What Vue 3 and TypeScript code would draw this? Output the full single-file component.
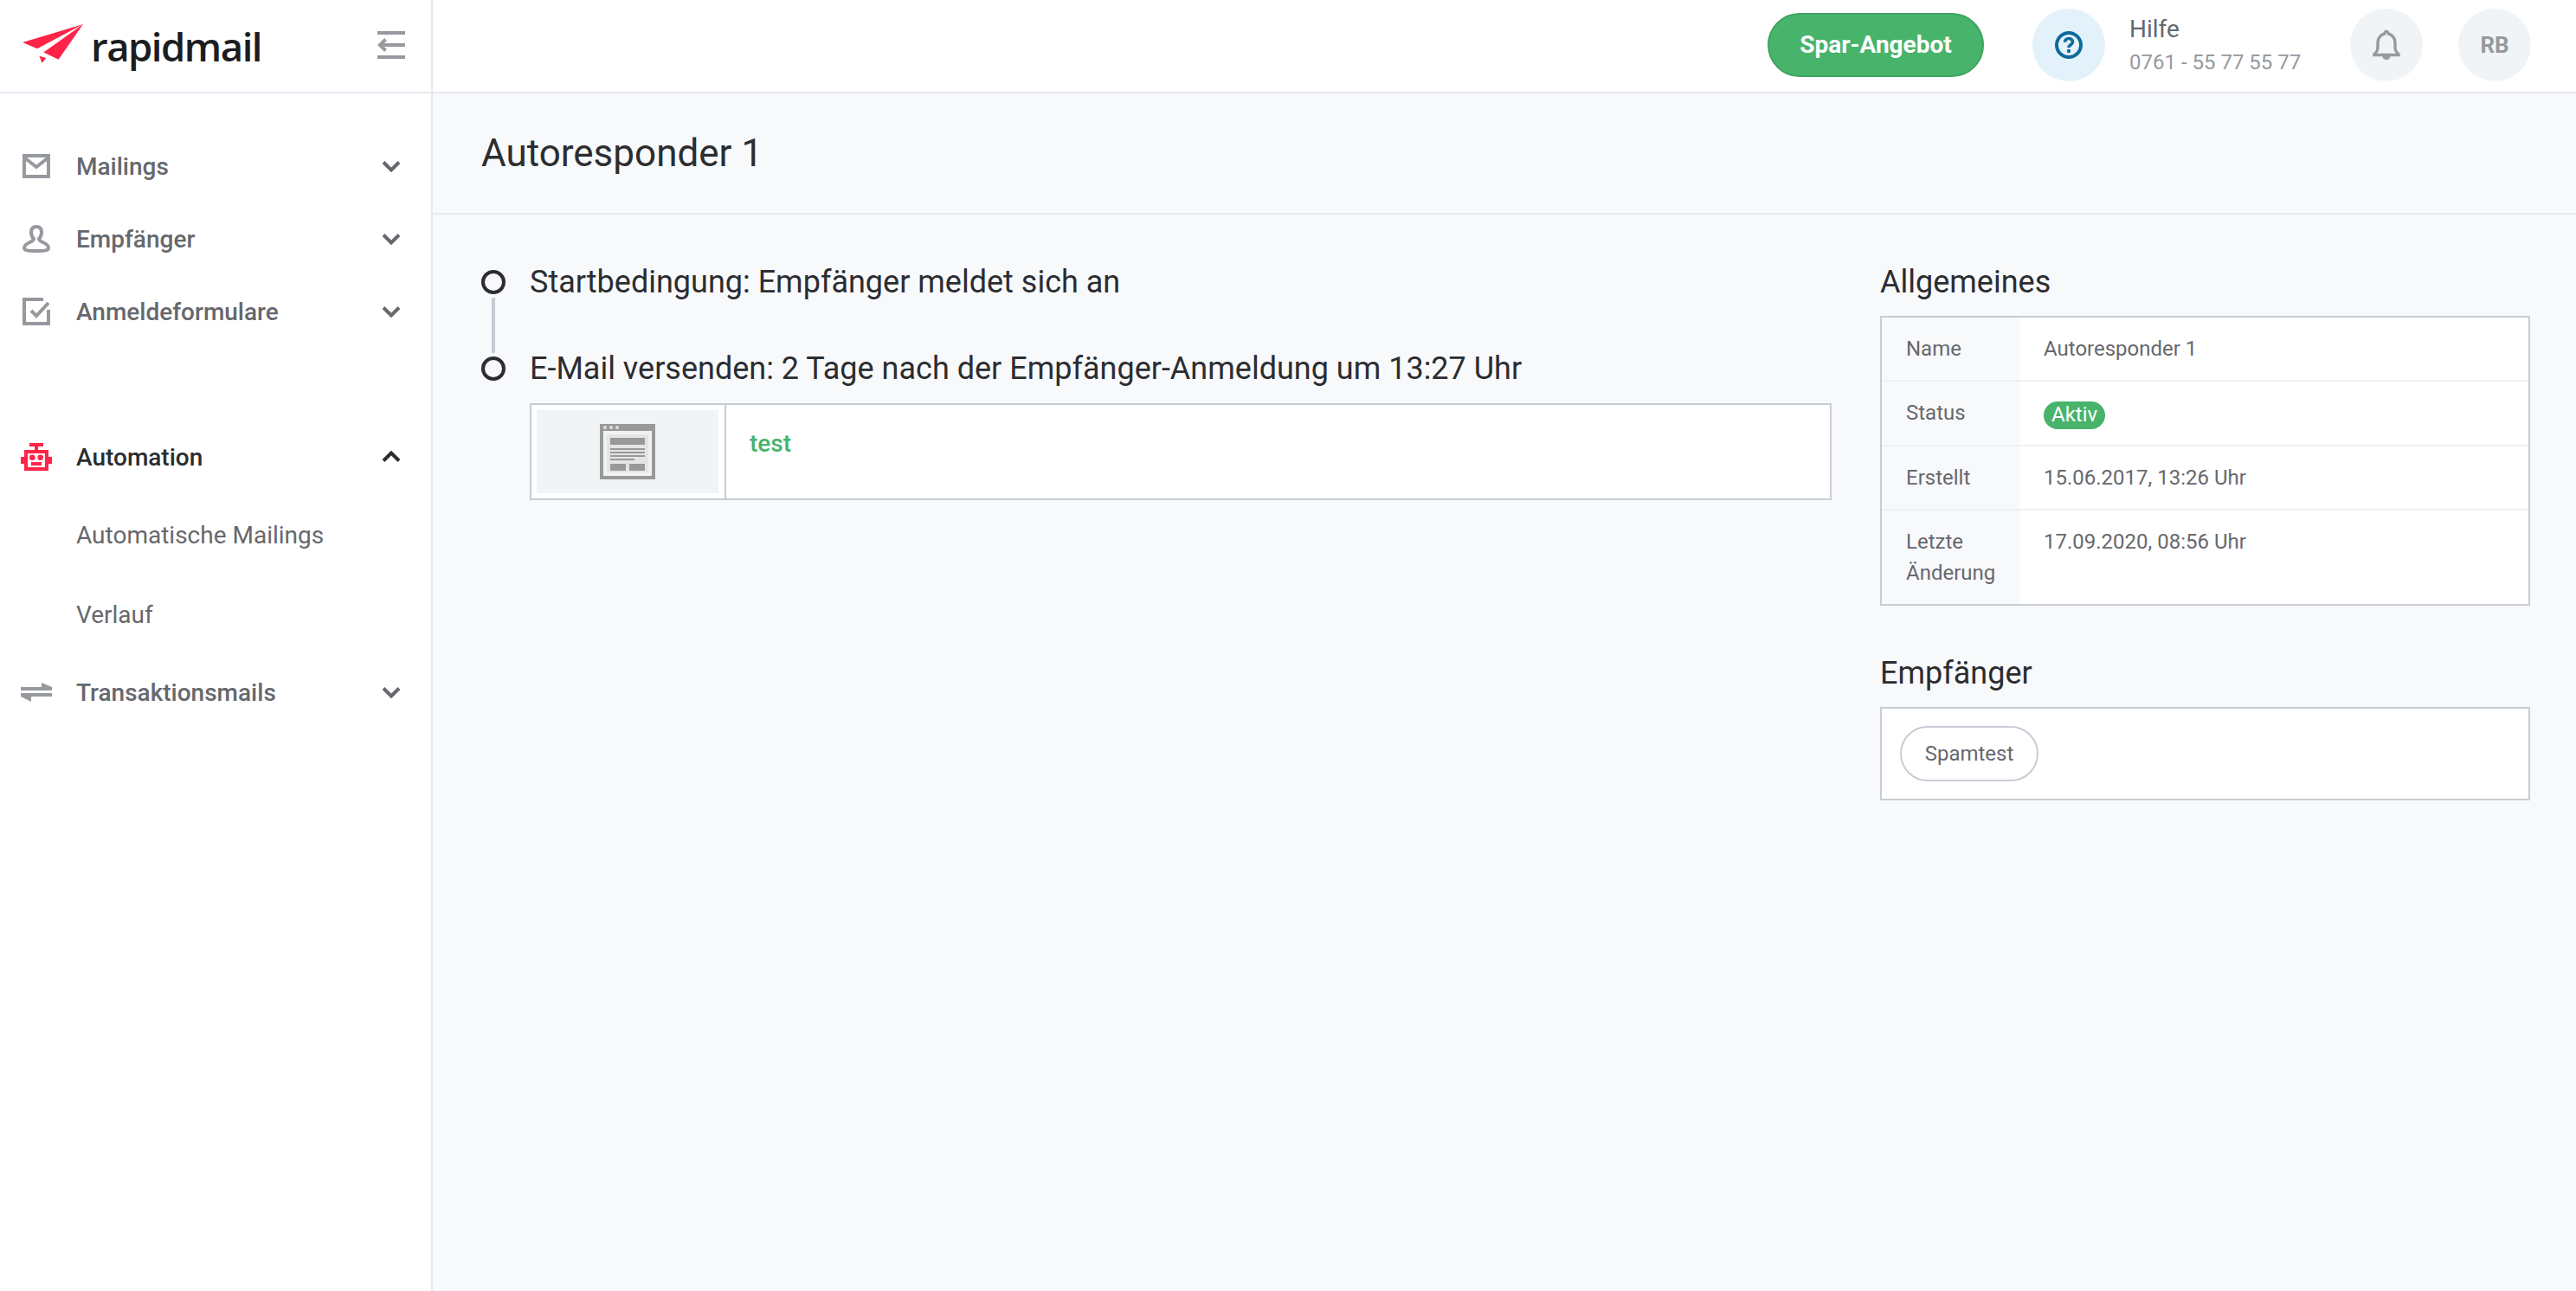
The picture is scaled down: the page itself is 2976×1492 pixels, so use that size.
<script setup lang="ts">
interface Row { label: string; value: string; badge?: boolean }
const rows: Row[] = [
  { label: 'Name', value: 'Autoresponder 1' },
  { label: 'Status', value: 'Aktiv', badge: true },
  { label: 'Erstellt', value: '15.06.2017, 13:26 Uhr' },
  { label: 'Letzte Änderung', value: '17.09.2020, 08:56 Uhr' },
]
</script>

<template>
  <div class="app">
    <aside class="sidebar">
      <div class="brand">
        <svg class="plane" width="72" height="46" viewBox="26 27 72 46">
          <path fill="#ff2448" d="M96 27 26 48l17 7.300zM96 27 50.300 59.500 67.600 67.700zM45.300 63.700l8 2.300-4.600 5.700z" />
        </svg>
        <span class="wordmark">rapidmail</span>
        <svg class="collapse" width="32" height="32" viewBox="0 0 32 32">
          <path fill="#96999e" d="M0 0h32v4H0zM0 28h32v4H0zM3 14h29v4H3z" />
          <path fill="none" stroke="#96999e" stroke-width="4" d="M9.500 9.500 3 16l6.500 6.500" />
        </svg>
      </div>
      <nav class="nav">
        <a class="item">
          <svg class="ico" width="32" height="28" viewBox="0 0 32 28"><g fill="none" stroke="#96999e" stroke-width="4"><rect x="2" y="2" width="28" height="24" /><path d="M2 4l14 11L30 4" /></g></svg>
          <span>Mailings</span>
          <svg class="chev" width="22" height="14" viewBox="0 0 22 14"><path d="M2 2.500l9 9 9-9" /></svg>
        </a>
        <a class="item">
          <svg class="ico" width="32" height="32" viewBox="0 0 32 32"><path fill="none" stroke="#96999e" stroke-width="4" d="M16 2c4 0 6 2.500 6 6.500 0 3.500-1 5.500-3 7.500 0 2 2 2.800 5 4.200 3.500 1.600 6 3.500 6 6.300 0 2.500-3 3.500-14 3.500S2 29 2 26.500c0-2.800 2.500-4.700 6-6.300 3-1.400 5-2.200 5-4.200-2-2-3-4-3-7.500C10 4.500 12 2 16 2z" /></svg>
          <span>Empfänger</span>
          <svg class="chev" width="22" height="14" viewBox="0 0 22 14"><path d="M2 2.500l9 9 9-9" /></svg>
        </a>
        <a class="item">
          <svg class="ico" width="32" height="32" viewBox="0 0 32 32"><path fill="none" stroke="#96999e" stroke-width="4" d="M24 2H2v28h28V14" /><path fill="none" stroke="#96999e" stroke-width="4" d="M10 15l6 6L30 6" /></svg>
          <span>Anmeldeformulare</span>
          <svg class="chev" width="22" height="14" viewBox="0 0 22 14"><path d="M2 2.500l9 9 9-9" /></svg>
        </a>
        <a class="item active">
          <svg class="ico robot" width="36" height="32" viewBox="0 0 36 32">
            <path fill="#ff2448" d="M10 0h16v4h-6v4h12v8h4v8h-4v8H4v-8H0v-8h4V8h12V4h-6z" />
            <path fill="#fff" d="M8 12h20v16H8z" />
            <circle cx="13.300" cy="16.700" r="3.300" fill="#ff2448" />
            <circle cx="22.700" cy="16.700" r="3.300" fill="#ff2448" />
            <path fill="#ff2448" d="M12 22h12v4H12z" />
          </svg>
          <span>Automation</span>
          <svg class="chev" width="22" height="14" viewBox="0 0 22 14"><path d="M2 11.500l9-9 9 9" /></svg>
        </a>
        <a class="sub first">Automatische Mailings</a>
        <a class="sub">Verlauf</a>
        <a class="item">
          <svg class="ico arrows" width="36" height="22" viewBox="0 0 36 22"><path fill="#96999e" d="M0 5h24V0l12 5v4H0zM0 12h36v4H12v6L0 16z" /></svg>
          <span>Transaktionsmails</span>
          <svg class="chev" width="22" height="14" viewBox="0 0 22 14"><path d="M2 2.500l9 9 9-9" /></svg>
        </a>
      </nav>
    </aside>

    <div class="main">
      <header class="topbar">
        <button class="offer">Spar-Angebot</button>
        <div class="help">
          <span class="circle blue">
            <svg width="32" height="32" viewBox="0 0 32 32">
              <circle cx="16" cy="16" r="14" fill="none" stroke="#0f6a9b" stroke-width="4" />
              <path fill="none" stroke="#0f6a9b" stroke-width="3.600" d="M11.500 12.800c0-2.700 2-4.300 4.500-4.300s4.500 1.500 4.500 3.900c0 3.400-4.500 3.300-4.500 6.600" />
              <circle cx="16" cy="23" r="2.200" fill="#0f6a9b" />
            </svg>
          </span>
          <div class="help-text">
            <div class="help-title">Hilfe</div>
            <div class="help-phone">0761 - 55 77 55 77</div>
          </div>
        </div>
        <span class="circle grey bell">
          <svg width="32" height="36" viewBox="0 0 32 36">
            <path fill="none" stroke="#96999e" stroke-width="3.400" d="M2 28.500c3-2.500 4-4 4-8.500v-5C6 9.500 10 6 13.500 5.200 14 3.500 15 2.500 16 2.500s2 1 2.500 2.700C22 6 26 9.500 26 15v5c0 4.500 1 6 4 8.500v1H2z" />
            <path fill="#96999e" d="M11.500 31h9c0 2.500-2 4-4.500 4s-4.500-1.500-4.500-4z" />
          </svg>
        </span>
        <span class="circle grey avatar">RB</span>
      </header>

      <div class="title-band"><h1>Autoresponder 1</h1></div>

      <div class="content">
        <section class="flow">
          <div class="step first-step">
            <span class="dot"></span>
            <h2>Startbedingung: Empfänger meldet sich an</h2>
          </div>
          <div class="step">
            <span class="dot"></span>
            <h2>E-Mail versenden: 2 Tage nach der Empfänger-Anmeldung um 13:27 Uhr</h2>
          </div>
          <div class="card">
            <div class="thumb-cell">
              <div class="thumb">
                <svg width="64" height="64" viewBox="0 0 64 64">
                  <rect width="64" height="64" fill="#999" />
                  <circle cx="6" cy="4" r="2" fill="#e0e0e0" />
                  <circle cx="13" cy="4" r="2" fill="#e0e0e0" />
                  <circle cx="20" cy="4" r="2" fill="#e0e0e0" />
                  <rect x="4" y="8" width="56" height="52" fill="#f2f2f2" />
                  <rect x="8" y="12" width="48" height="44" fill="#e4e4e4" />
                  <rect x="12" y="16" width="40" height="8" fill="#999" />
                  <rect x="12" y="28" width="40" height="2" fill="#999" />
                  <rect x="12" y="32" width="40" height="2" fill="#999" />
                  <rect x="12" y="36" width="40" height="2" fill="#999" />
                  <rect x="12" y="40" width="28" height="2" fill="#999" />
                  <rect x="12" y="46" width="18" height="8" fill="#999" />
                  <rect x="34" y="46" width="18" height="8" fill="#999" />
                </svg>
              </div>
            </div>
            <a class="mail-name">test</a>
          </div>
        </section>

        <aside class="details">
          <h3>Allgemeines</h3>
          <div class="table">
            <div v-for="r in rows" :key="r.label" class="tr">
              <div class="th">{{ r.label }}</div>
              <div class="td">
                <span v-if="r.badge" class="badge">{{ r.value }}</span>
                <template v-else>{{ r.value }}</template>
              </div>
            </div>
          </div>
          <h3 class="second">Empfänger</h3>
          <div class="recipients"><span class="pill">Spamtest</span></div>
        </aside>
      </div>
    </div>
  </div>
</template>

<style>
html, body { margin: 0; padding: 0; background: #f8f9fb; }
</style>

<style scoped>
* { box-sizing: border-box; }
.app {
  display: flex;
  min-height: 1492px;
  font-family: Roboto, "Liberation Sans", sans-serif;
  color: #2b2d31;
}
.sidebar {
  width: 500px;
  flex: none;
  background: #fff;
  border-right: 2px solid #e6e9f0;
}
.brand {
  height: 108px;
  display: flex;
  align-items: center;
  padding: 0 30px 0 26px;
  border-bottom: 2px solid #e6e9f0;
}
.plane { margin-top: -4px; }
.wordmark {
  margin-left: 7px;
  font-family: "Open Sans", sans-serif;
  font-size: 45.5px;
  font-weight: 600;
  letter-spacing: -1.5px;
  color: #1c1d20;
  line-height: 50px;
}
.collapse { margin-left: auto; margin-top: -2px; }
.nav { padding-top: 42px; display: flex; flex-direction: column; }
.item {
  height: 84px;
  display: flex;
  align-items: center;
  position: relative;
  padding-left: 88px;
  font-size: 28px;
  font-weight: 500;
  color: #66686d;
}
.item.active { margin-top: 84px; color: #2b2d31; }
.ico { position: absolute; left: 26px; top: 50%; transform: translateY(-50%); }
.robot, .arrows { left: 24px; }
.chev {
  position: absolute;
  left: 441px;
  top: 35px;
  fill: none;
  stroke: #66686d;
  stroke-width: 4;
}
.active .chev { stroke: #2b2d31; }
.sub {
  height: 92px;
  display: flex;
  align-items: center;
  padding-left: 88px;
  font-size: 28px;
  color: #66686d;
}
.sub.first { margin-top: 2px; }
.sub + .item { margin-top: 2px; }

.main { flex: 1; min-width: 0; display: flex; flex-direction: column; }
.topbar {
  height: 108px;
  background: #fff;
  border-bottom: 2px solid #e6e9f0;
  display: flex;
  align-items: center;
  padding: 0 52px 2px 0;
  justify-content: flex-end;
}
.offer {
  width: 250px;
  height: 74px;
  border: 2px solid #3fa45f;
  border-radius: 37px;
  background: #47b36b;
  color: #fff;
  font: 700 28px Roboto, sans-serif;
  margin-right: 56px;
  padding: 0 0 2px;
}
.help { display: flex; align-items: center; margin-right: 55px; width: 312px; }
.circle {
  width: 84px;
  height: 84px;
  border-radius: 50%;
  display: flex;
  align-items: center;
  justify-content: center;
  flex: none;
}
.blue { background: #e3f2fa; }
.grey { background: #f1f4f7; }
.help-text { margin-left: 28px; padding-top: 2px; }
.help-title { font-size: 28px; line-height: 36px; color: #66686d; }
.help-phone { font-size: 24px; line-height: 36px; color: #96999e; margin-top: 2px; }
.bell { margin-right: 41px; }
.avatar { font-size: 26px; font-weight: 700; color: #96999e; }

.title-band {
  height: 140px;
  display: flex;
  align-items: center;
  padding-left: 56px;
  border-bottom: 2px solid #e6e9f0;
}
h1 { margin: 0; font-size: 44px; font-weight: 400; color: #2b2d31; }

.content { display: flex; padding: 0 53px 0 56px; }
.flow { width: 1560px; padding-top: 57px; flex: none; }
.step { position: relative; padding-left: 56px; height: 42px; display: flex; align-items: center; }
.step h2 { margin: 0; font-size: 36px; font-weight: 400; line-height: 42px; white-space: nowrap; color: #2b2d31; }
.first-step { margin-bottom: 58px; }
.dot {
  position: absolute;
  left: 0;
  top: 7px;
  width: 28px;
  height: 28px;
  border-radius: 50%;
  border: 4px solid #2b2d31;
  background: #f8f9fb;
  z-index: 1;
}
.first-step::after {
  content: "";
  position: absolute;
  left: 12px;
  top: 39px;
  width: 4px;
  height: 64px;
  background: #c8ccd4;
}
.card {
  margin: 19px 0 0 56px;
  height: 112px;
  background: #fff;
  border: 2px solid #c8ccd4;
  display: flex;
}
.thumb-cell {
  width: 225px;
  padding: 6px 6px;
  border-right: 2px solid #c8ccd4;
  flex: none;
}
.thumb {
  height: 96px;
  width: 210px;
  background: #f1f4f7;
  display: flex;
  align-items: center;
  justify-content: center;
}
.mail-name {
  margin: 28px 0 0 27px;
  font-size: 28px;
  line-height: 34px;
  font-weight: 500;
  color: #47b36b;
}
.details { margin-left: 56px; flex: 1; min-width: 0; padding-top: 57px; }
h3 { margin: 0; font-size: 36px; font-weight: 400; line-height: 42px; color: #2b2d31; }
h3.second { margin-top: 57px; }
.table {
  margin-top: 18px;
  border: 2px solid #c8ccd4;
  background: #fff;
}
.tr { display: flex; border-bottom: 2px solid #eef0f4; }
.tr:last-child { border-bottom: 0; }
.th {
  width: 160px;
  flex: none;
  background: #f8f9fb;
  padding: 18px 0 18px 28px;
  font-size: 24px;
  line-height: 36px;
  color: #66686d;
}
.td {
  padding: 18px 27px;
  font-size: 24px;
  line-height: 36px;
  color: #66686d;
}
.badge {
  display: inline-block;
  height: 32px;
  line-height: 30px;
  padding: 0 9px;
  background: #47b36b;
  color: #fff;
  border-radius: 16px;
  vertical-align: top;
  margin-top: 5px;
}
.recipients {
  margin-top: 18px;
  height: 108px;
  background: #fff;
  border: 2px solid #c8ccd4;
  padding: 20px 21px;
}
.pill {
  display: inline-flex;
  align-items: center;
  justify-content: center;
  width: 160px;
  height: 64px;
  border: 2px solid #c8ccd4;
  border-radius: 32px;
  font-size: 24px;
  color: #66686d;
}
</style>
